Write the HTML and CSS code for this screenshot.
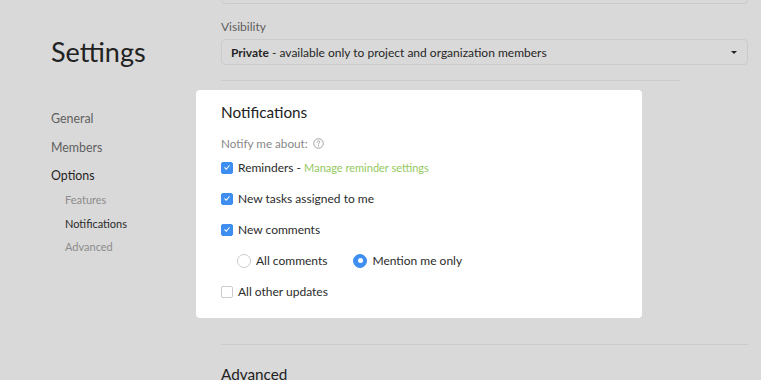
FILE: index.html
```html
<!DOCTYPE html>
<html lang="en">
<head>
<meta charset="utf-8">
<title>Settings</title>
<link rel="stylesheet" href="styles.css">
</head>
<body>
<div class="page">
  <aside class="sidebar">
    <h1 class="title">Settings</h1>
    <nav class="nav">
      <a class="nav-item">General</a>
      <a class="nav-item">Members</a>
      <a class="nav-item active">Options</a>
      <div class="subnav">
        <a class="sub-item">Features</a>
        <a class="sub-item current">Notifications</a>
        <a class="sub-item">Advanced</a>
      </div>
    </nav>
  </aside>
  <main class="content">
    <div class="top-input"></div>
    <div class="field-label">Visibility</div>
    <div class="select">
      <span class="select-text"><b>Private</b> - available only to project and organization members</span>
      <span class="caret"></span>
    </div>
    <hr class="sep short">
    <section class="card">
      <h2 class="card-title">Notifications</h2>
      <div class="notify-label">Notify me about:
        <svg class="help" width="11" height="11" viewBox="0 0 11 11" aria-hidden="true">
          <circle cx="5.5" cy="5.5" r="4.8" fill="none" stroke="#9a9a9a" stroke-width="0.9"/>
          <path d="M4.1 4.3 C4.1 3.4 4.7 2.9 5.5 2.9 C6.3 2.9 6.9 3.4 6.9 4.1 C6.9 5 5.5 5.1 5.5 6.2" fill="none" stroke="#9a9a9a" stroke-width="0.9" stroke-linecap="round"/>
          <circle cx="5.5" cy="7.9" r="0.6" fill="#9a9a9a"/>
        </svg>
      </div>
      <div class="row">
        <span class="check on"><svg width="13" height="13" viewBox="0 0 13 13"><path d="M3.6 6.8 L5.6 8.8 L9.4 4.2" fill="none" stroke="#fff" stroke-width="1.4" stroke-linecap="round" stroke-linejoin="round"/></svg></span>
        <span class="row-label">Reminders - <span class="link">Manage reminder settings</span></span>
      </div>
      <div class="row">
        <span class="check on"><svg width="13" height="13" viewBox="0 0 13 13"><path d="M3.6 6.8 L5.6 8.8 L9.4 4.2" fill="none" stroke="#fff" stroke-width="1.4" stroke-linecap="round" stroke-linejoin="round"/></svg></span>
        <span class="row-label">New tasks assigned to me</span>
      </div>
      <div class="row">
        <span class="check on"><svg width="13" height="13" viewBox="0 0 13 13"><path d="M3.6 6.8 L5.6 8.8 L9.4 4.2" fill="none" stroke="#fff" stroke-width="1.4" stroke-linecap="round" stroke-linejoin="round"/></svg></span>
        <span class="row-label">New comments</span>
      </div>
      <div class="row radios">
        <span class="radio-option"><span class="radio"></span><span class="row-label">All comments</span></span>
        <span class="radio-option"><span class="radio on"></span><span class="row-label">Mention me only</span></span>
      </div>
      <div class="row">
        <span class="check"></span>
        <span class="row-label">All other updates</span>
      </div>
    </section>
    <hr class="sep bottom">
    <h2 class="section-title">Advanced</h2>
  </main>
</div>
</body>
</html>
```
FILE: styles.css
```css
html, body {
  margin: 0;
  padding: 0;
}
body {
  background: #ffffff;
  font-family: Lato, "Open Sans", sans-serif;
  height: 380px;
  overflow: hidden;
}
.page {
  width: 761px;
  height: 380px;
  background: #d9d9d9;
  display: flex;
  align-items: flex-start;
  overflow: hidden;
}
.sidebar {
  width: 170px;
  padding-left: 51px;
  flex: none;
}
.title {
  margin: 35px 0 0;
  font-size: 27px;
  line-height: 34px;
  font-weight: 400;
  color: #222;
}
.nav {
  margin-top: 36px;
  display: flex;
  flex-direction: column;
}
.nav-item {
  font-size: 12.4px;
  line-height: 28.5px;
  color: #5f5f5f;
}
.nav-item.active {
  color: #1f1f1f;
}
.subnav {
  display: flex;
  flex-direction: column;
  padding-left: 14px;
  margin-top: -2.5px;
}
.sub-item {
  font-size: 11px;
  line-height: 23.5px;
  color: #8c8c8c;
}
.sub-item.current {
  color: #2a2a2a;
}
.content {
  width: 527px;
  flex: none;
  display: flex;
  flex-direction: column;
}
.content > * {
  flex: none;
}
.top-input {
  height: 30px;
  margin-top: -26px;
  border: 1px solid #cbcbcb;
  border-radius: 4px;
  box-sizing: border-box;
}
.field-label {
  margin-top: 15px;
  font-size: 12px;
  line-height: 16px;
  color: #5e5e5e;
}
.select {
  margin-top: 4px;
  height: 26px;
  box-sizing: border-box;
  border: 1px solid #cbcbcb;
  border-radius: 4px;
  display: flex;
  align-items: center;
  justify-content: space-between;
  padding: 0 9px;
}
.select-text {
  font-size: 12px;
  color: #262626;
}
.select-text b {
  font-weight: 700;
}
.caret {
  width: 0;
  height: 0;
  border-left: 3.5px solid transparent;
  border-right: 3.5px solid transparent;
  border-top: 3.5px solid #222;
  margin-right: 1px;
}
.sep {
  margin: 15px 0 0;
  border: 0;
  height: 1px;
  background: #cacaca;
  width: 100%;
}
.sep.short {
  width: 459px;
}
.sep.bottom {
  margin-top: 26px;
}
.card {
  margin: 9px 0 0 -25px;
  width: 446px;
  box-sizing: border-box;
  background: #fff;
  border-radius: 4px;
  padding: 12px 25px 11px;
  display: flex;
  flex-direction: column;
}
.card > * {
  flex: none;
}
.card-title {
  margin: 0;
  font-size: 15.3px;
  line-height: 20px;
  font-weight: 400;
  color: #222;
}
.notify-label {
  margin-top: 12px;
  font-size: 11.7px;
  line-height: 18px;
  color: #878787;
  display: flex;
  align-items: center;
  gap: 5px;
}
.help {
  display: block;
}
.row {
  height: 31px;
  display: flex;
  align-items: center;
  gap: 5px;
}
.row-label {
  font-size: 12px;
  color: #2b2b2b;
}
.link {
  color: #94c95e;
  font-size: 11px;
}
.check {
  width: 12px;
  height: 12px;
  border-radius: 2px;
  box-sizing: border-box;
  border: 1px solid #cccccc;
  background: #fff;
  display: flex;
  align-items: center;
  justify-content: center;
  flex: none;
}
.check svg {
  display: block;
}
.check.on {
  background: #3d8ef0;
  border-color: #3d8ef0;
}
.radios {
  padding-left: 16px;
  gap: 0;
}
.radio-option {
  display: flex;
  align-items: center;
  gap: 5px;
  margin-right: 26px;
}
.radio {
  width: 14px;
  height: 14px;
  border-radius: 50%;
  box-sizing: border-box;
  border: 1px solid #cccccc;
  background: #fff;
  flex: none;
  display: flex;
  align-items: center;
  justify-content: center;
}
.radio.on {
  background: #3d8ef0;
  border-color: #3d8ef0;
}
.radio.on::after {
  content: "";
  width: 5px;
  height: 5px;
  border-radius: 50%;
  background: #fff;
}
.section-title {
  margin: 19px 0 0;
  font-size: 15.3px;
  line-height: 20px;
  font-weight: 400;
  color: #222;
}
```
